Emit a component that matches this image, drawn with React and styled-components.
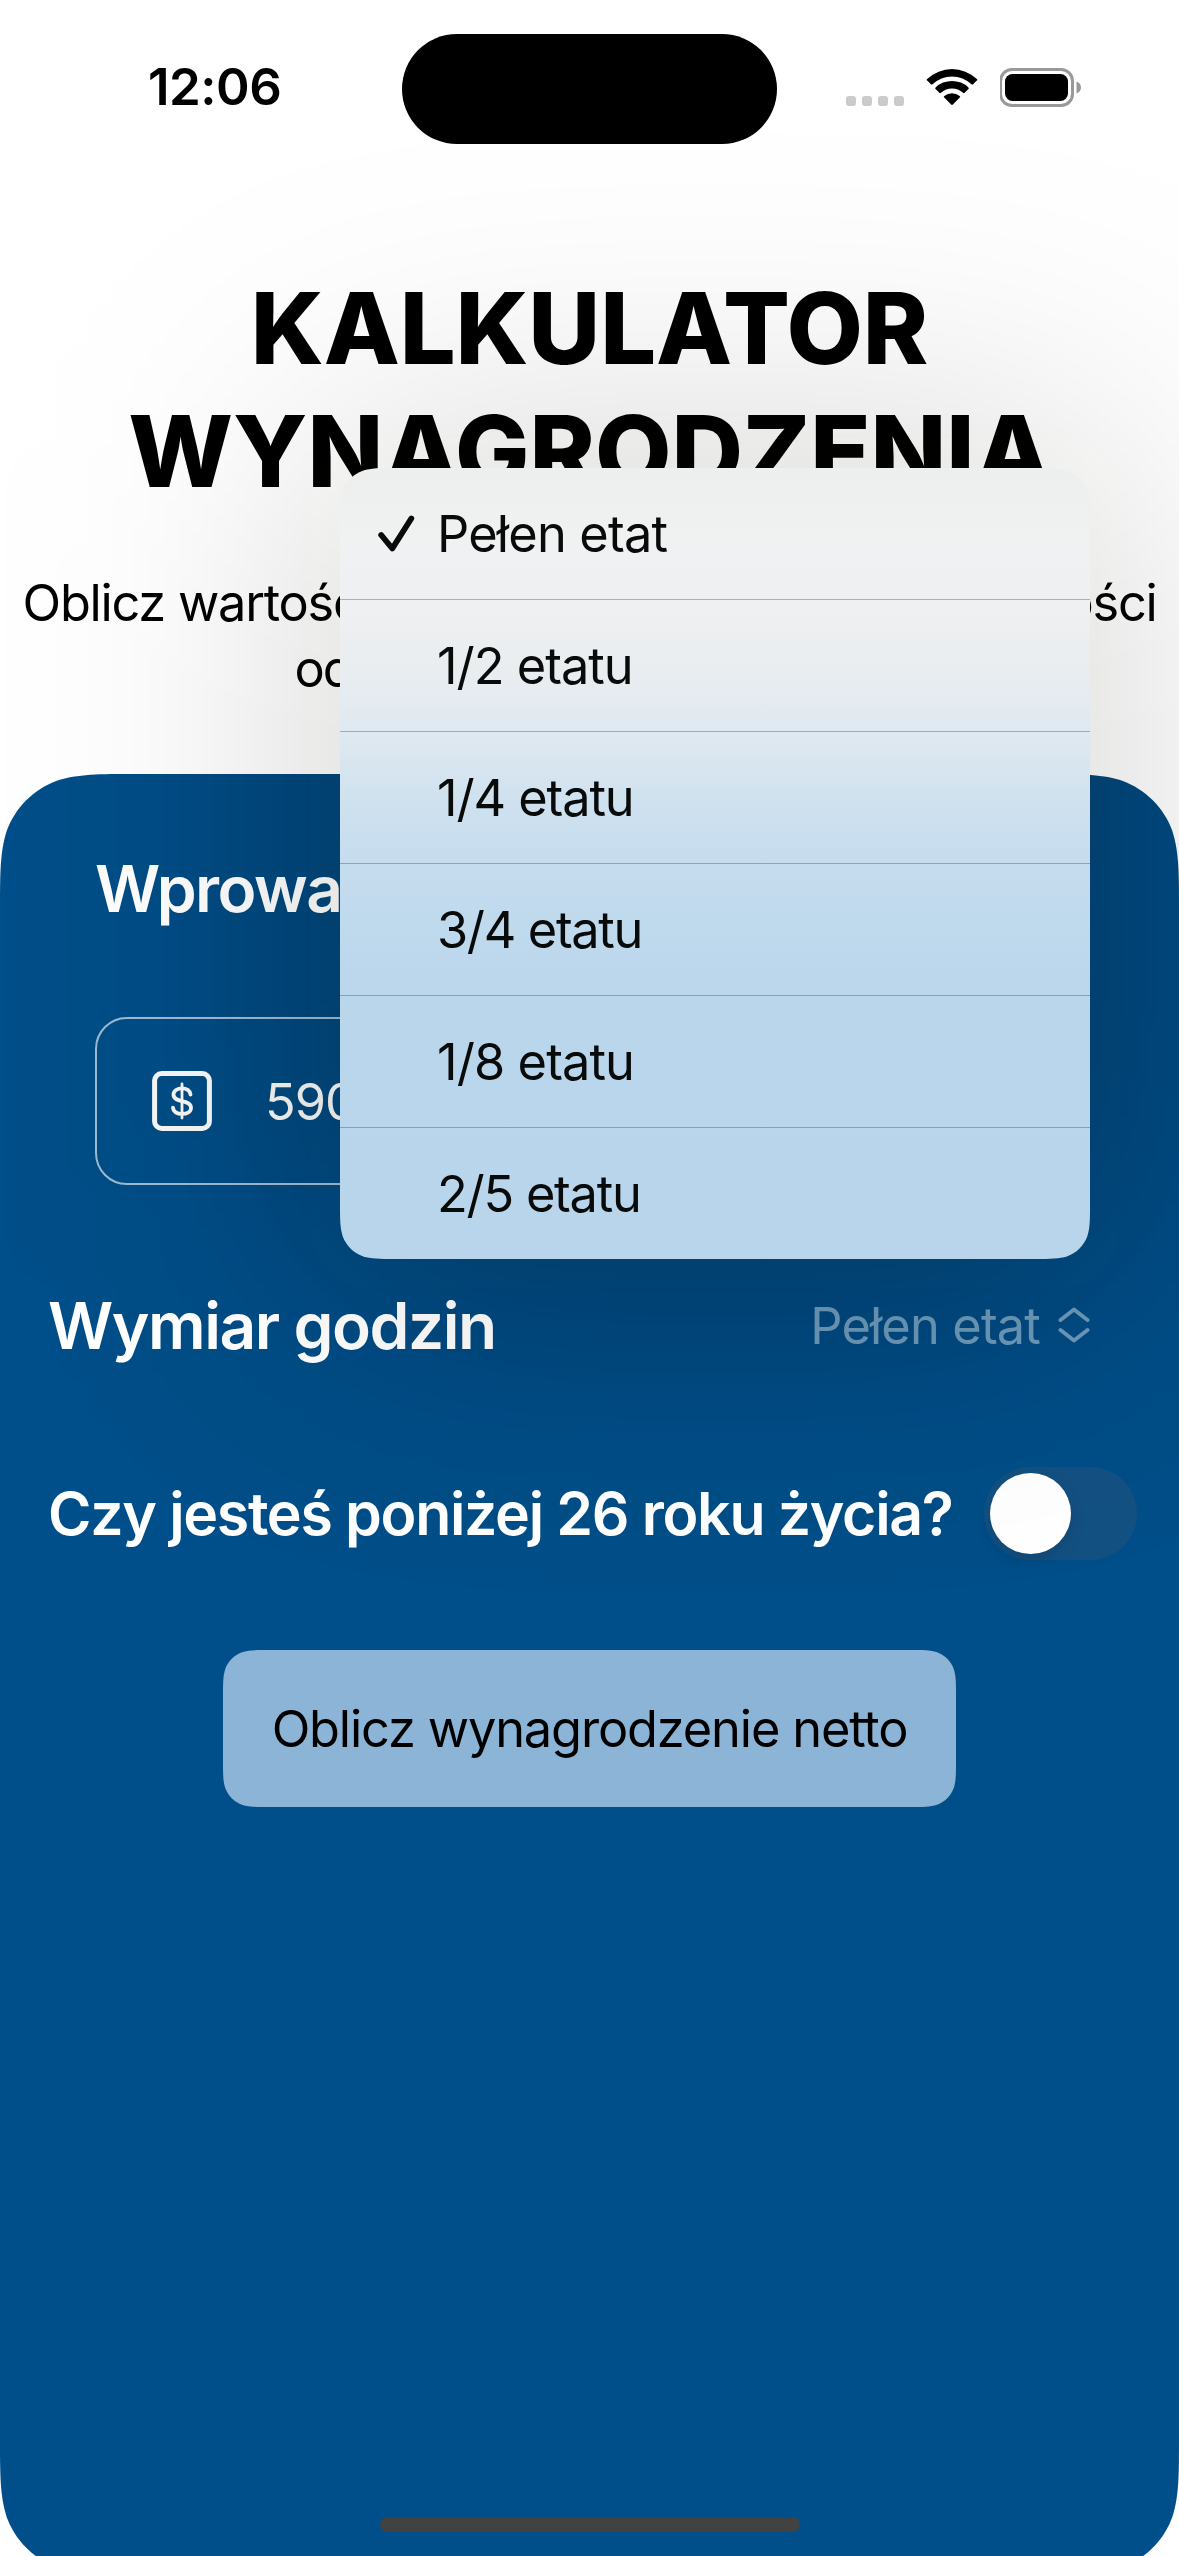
import React from "react";
import styled, { createGlobalStyle } from "styled-components";

const GlobalStyle = createGlobalStyle`
  *, *::before, *::after { box-sizing: border-box; }
  html, body { margin: 0; padding: 0; background: #fff; }
  body { font-family: Inter, "Liberation Sans", sans-serif; overflow: hidden; }
  h1, h2, p { margin: 0; }
  button { font: inherit; border: 0; padding: 0; }
  svg { display: block; flex: none; }
`;

/* Outline of a rectangle with continuous (iOS style) corners. */
function continuousRect(w, h, r) {
  const a = 1.528665 * r, b = 1.088493 * r, c = 0.868407 * r;
  const d = 0.631494 * r, e = 0.074911 * r, f = 0.372824 * r, g = 0.16906 * r;
  return [
    `M${a} 0L${w - a} 0`,
    `C${w - b} 0 ${w - c} 0 ${w - d} ${e}`,
    `C${w - f} ${g} ${w - g} ${f} ${w - e} ${d}`,
    `C${w} ${c} ${w} ${b} ${w} ${a}L${w} ${h - a}`,
    `C${w} ${h - b} ${w} ${h - c} ${w - e} ${h - d}`,
    `C${w - g} ${h - f} ${w - f} ${h - g} ${w - d} ${h - e}`,
    `C${w - c} ${h} ${w - b} ${h} ${w - a} ${h}L${a} ${h}`,
    `C${b} ${h} ${c} ${h} ${d} ${h - e}`,
    `C${f} ${h - g} ${g} ${h - f} ${e} ${h - d}`,
    `C0 ${h - c} 0 ${h - b} 0 ${h - a}L0 ${a}`,
    `C0 ${b} 0 ${c} ${e} ${d}`,
    `C${g} ${f} ${f} ${g} ${d} ${e}`,
    `C${c} 0 ${b} 0 ${a} 0Z`,
  ].join("");
}

const Screen = styled.main`
  position: relative;
  display: flex;
  flex-direction: column;
  width: 1179px;
  height: 2556px;
  overflow: hidden;
  background: #fff;
  color: #000;
`;

const StatusBar = styled.header`
  display: grid;
  grid-template-columns: 402px 375px 1fr;
  align-items: center;
  height: 110px;
  margin-top: 34px;
  flex: none;
`;

const Clock = styled.time`
  padding: 0 0 4px 148px;
  font-size: 51px;
  line-height: 60px;
  font-weight: 600;
  letter-spacing: -0.5px;
`;

const Island = styled.div`
  height: 110px;
  border-radius: 55px;
  background: #000;
`;

const Indicators = styled.div`
  display: flex;
  align-items: flex-start;
  gap: 22px;
  padding: 0 0 3px 69px;
`;

const Dots = styled.div`
  display: flex;
  gap: 6px;
  margin-top: 28px;
`;

const Dot = styled.i`
  width: 10px;
  height: 10px;
  border-radius: 3px;
  background: #cbcbcb;
`;

const Title = styled.h1`
  display: flex;
  flex-direction: column;
  align-items: center;
  margin-top: 123px;
  font-size: 99px;
  line-height: 123px;
  font-weight: 800;
`;

const Subtitle = styled.p`
  display: flex;
  flex-direction: column;
  align-items: center;
  margin-top: 57px;
  font-size: 50.5px;
  line-height: 66px;
`;

const Line = styled.span`
  white-space: nowrap;
  letter-spacing: ${(p) => p.$tracking || 0}px;
`;

const Panel = styled.section`
  position: relative;
  display: flex;
  flex-direction: column;
  flex: none;
  width: 1179px;
  height: 1800px;
  margin-top: 72px;
  padding-top: 75px;
  background: #004f8a;
  color: #fff;
  clip-path: path("${continuousRect(1179, 1800, 90)}");

  &::before {
    content: "";
    position: absolute;
    left: 310px;
    top: -336px;
    width: 810px;
    height: 851px;
    border-radius: 60px;
    background: rgba(0, 0, 0, 0.18);
    filter: blur(140px);
  }

  > * { position: relative; }
`;

const Heading = styled.h2`
  font-size: ${(p) => p.$size}px;
  line-height: 80px;
  font-weight: 600;
  white-space: nowrap;
  letter-spacing: ${(p) => p.$tracking}px;
  margin-left: ${(p) => p.$inset || 0}px;
`;

const AmountField = styled.div`
  display: flex;
  align-items: center;
  gap: 53px;
  height: 168px;
  margin: 88px 95px 0;
  padding-left: 55px;
  border: 2px solid rgba(255, 255, 255, 0.62);
  border-radius: 32px;
  font-size: 50.5px;
  color: #f6f6f5;
`;

const SettingRow = styled.div`
  display: flex;
  align-items: center;
  justify-content: space-between;
  height: ${(p) => p.$height}px;
  margin-top: 101px;
  padding: 0 ${(p) => p.$right}px 0 48px;
`;

const Picker = styled.div`
  display: flex;
  align-items: center;
  gap: 18px;
  padding-bottom: 2px;
  font-size: 50.5px;
  color: rgba(180, 206, 222, 0.6);
`;

const Switch = styled.div`
  display: flex;
  align-items: center;
  flex: none;
  width: 153px;
  height: 93px;
  padding: 6px;
  border-radius: 47px;
  background: #145183;
`;

const Knob = styled.i`
  width: 81px;
  height: 81px;
  border-radius: 50%;
  background: #fff;
  box-shadow: 0 6px 16px rgba(0, 0, 0, 0.12);
`;

const SubmitButton = styled.button`
  align-self: center;
  width: 733px;
  height: 157px;
  margin-top: 90px;
  background: #8bb4d6;
  color: #000;
  font-size: 50.5px;
  clip-path: path("${continuousRect(733, 157, 30)}");
`;

const MenuLayer = styled.div`
  position: absolute;
  left: 340px;
  top: 468px;
  width: 750px;
  height: 791px;

  &::before {
    content: "";
    position: absolute;
    inset: -30px;
    border-radius: 60px;
    background: rgba(4, 4, 0, 0.16);
    filter: blur(150px);
  }
`;

const Menu = styled.ul`
  position: relative;
  display: flex;
  flex-direction: column;
  height: 791px;
  margin: 0;
  padding: 0;
  list-style: none;
  color: #090b0b;
  font-size: 50.5px;
  background: linear-gradient(
    #edefee 0,
    #f0f1f1 70px,
    #eff0f1 135px,
    #e9edf0 205px,
    #dfe9f1 265px,
    #cfe1ef 335px,
    #c5dcee 400px,
    #bfd9ed 460px,
    #bad6eb 540px,
    #b9d5eb 791px
  );
  clip-path: path("${continuousRect(750, 791, 36)}");
`;

const MenuItem = styled.li`
  display: grid;
  grid-template-columns: 59px 1fr;
  align-items: center;
  height: 132px;
  padding-left: 38px;
  border-bottom: 1px solid ${(p) => p.$line};

  &:last-child {
    height: 131px;
    border-bottom: 0;
  }
`;

const HomeIndicator = styled.div`
  position: absolute;
  left: 380px;
  bottom: 24px;
  width: 420px;
  height: 15px;
  border-radius: 8px;
  background: #424242;
`;

const WifiIcon = () => (
  <svg width="52" height="38" viewBox="0 0 52 38">
    <path d="M1.2 12.6a1 1 0 0 1 0-1.6 36 36 0 0 1 49.6 0 1 1 0 0 1 0 1.6l-3.7 3.7a1.2 1.2 0 0 1-1.7 0 28 28 0 0 0-38.8 0 1.2 1.2 0 0 1-1.7 0z" />
    <path d="M9.6 21.1a1.1 1.1 0 0 1 0-1.7 24 24 0 0 1 32.8 0 1.1 1.1 0 0 1 0 1.7l-3.8 3.7a1.2 1.2 0 0 1-1.6 0 16.4 16.4 0 0 0-22 0 1.2 1.2 0 0 1-1.6 0z" />
    <path d="M18.2 29.6a1.1 1.1 0 0 1 .1-1.7 12.4 12.4 0 0 1 15.4 0 1.1 1.1 0 0 1 .1 1.7l-6.9 7a1.3 1.3 0 0 1-1.8 0z" />
  </svg>
);

const BatteryIcon = () => (
  <svg width="84" height="39" viewBox="1 0 84 39">
    <rect x="1.5" y="1.5" width="72" height="36" rx="11.5" fill="none" stroke="#999" strokeWidth="3" />
    <rect x="6" y="6" width="63" height="27" rx="7.5" />
    <path d="M77.5 13.5c2.7 .9 4.5 3.2 4.5 6s-1.8 5.1-4.5 6z" fill="#999" />
  </svg>
);

const DollarSquareIcon = () => (
  <svg width="60" height="60" viewBox="0 0 60 60" fill="none" stroke="#f8f8f8" strokeLinecap="round">
    <rect x="2.6" y="2.6" width="54.8" height="54.8" rx="7" strokeWidth="5" />
    <path d="M30 13v34" strokeWidth="2.8" />
    <path d="M38.5 23.5C38 19.5 34.5 17.3 30 17.3S21.5 19.7 21.5 23.6C21.5 28 25.5 29.1 30 30.1S39 32.3 39 36.7C39 40.7 35 42.9 30 42.9S21.3 40.7 21 36.7" strokeWidth="3.8" />
  </svg>
);

const UpDownIcon = () => (
  <svg width="32" height="36" viewBox="0 0 32 36" fill="none" stroke="currentColor" strokeWidth="4" strokeLinecap="round" strokeLinejoin="round">
    <path d="M2.5 13 16 2.5 29.5 13M2.5 23 16 33.5 29.5 23" />
  </svg>
);

const CheckIcon = () => (
  <svg width="37" height="37" viewBox="0 0 37 37" fill="none" stroke="#090b0b" strokeWidth="5.8" strokeLinecap="round" strokeLinejoin="round">
    <path d="M3.2 20 14.3 33.5 33.3 3.5" />
  </svg>
);

const OPTIONS = [
  { label: "Pełen etat", line: "#adb0b0", tracking: -0.8, selected: true },
  { label: "1/2 etatu", line: "#9badbb", tracking: -1 },
  { label: "1/4 etatu", line: "#82a6c4", tracking: -1.1 },
  { label: "3/4 etatu", line: "#76a3cb", tracking: -1.35 },
  { label: "1/8 etatu", line: "#76a3cb", tracking: -0.9 },
  { label: "2/5 etatu", line: "transparent", tracking: -1.25 },
];

export default function App() {
  return (
    <>
      <GlobalStyle />
      <Screen>
        <StatusBar>
          <Clock>12:06</Clock>
          <Island />
          <Indicators>
            <Dots>
              <Dot />
              <Dot />
              <Dot />
              <Dot />
            </Dots>
            <WifiIcon />
            <BatteryIcon />
          </Indicators>
        </StatusBar>

        <Title>
          <Line $tracking={-0.2}>KALKULATOR</Line>
          <Line>WYNAGRODZENIA</Line>
        </Title>
        <Subtitle>
          <Line $tracking={-1.25}>Oblicz wartość wynagrodzenia netto w zależności</Line>
          <Line $tracking={-1.85}>od wymiaru godzin i wieku</Line>
        </Subtitle>

        <Panel>
          <Heading $size={64} $inset={95} $tracking={-1.5}>Wprowadź kwotę brutto</Heading>
          <AmountField>
            <DollarSquareIcon />
            <Line $tracking={-1}>5900</Line>
          </AmountField>
          <SettingRow $height={80} $right={89}>
            <Heading $size={64} $tracking={-1.45}>Wymiar godzin</Heading>
            <Picker>
              <Line $tracking={-0.85}>Pełen etat</Line>
              <UpDownIcon />
            </Picker>
          </SettingRow>
          <SettingRow $height={93} $right={42}>
            <Heading $size={59} $tracking={-1.32}>Czy jesteś poniżej 26 roku życia?</Heading>
            <Switch>
              <Knob />
            </Switch>
          </SettingRow>
          <SubmitButton>
            <Line $tracking={-1.15}>Oblicz wynagrodzenie netto</Line>
          </SubmitButton>
        </Panel>

        <MenuLayer>
          <Menu>
            {OPTIONS.map((o) => (
              <MenuItem key={o.label} $line={o.line}>
                <span>{o.selected && <CheckIcon />}</span>
                <Line $tracking={o.tracking}>{o.label}</Line>
              </MenuItem>
            ))}
          </Menu>
        </MenuLayer>
        <HomeIndicator />
      </Screen>
    </>
  );
}
